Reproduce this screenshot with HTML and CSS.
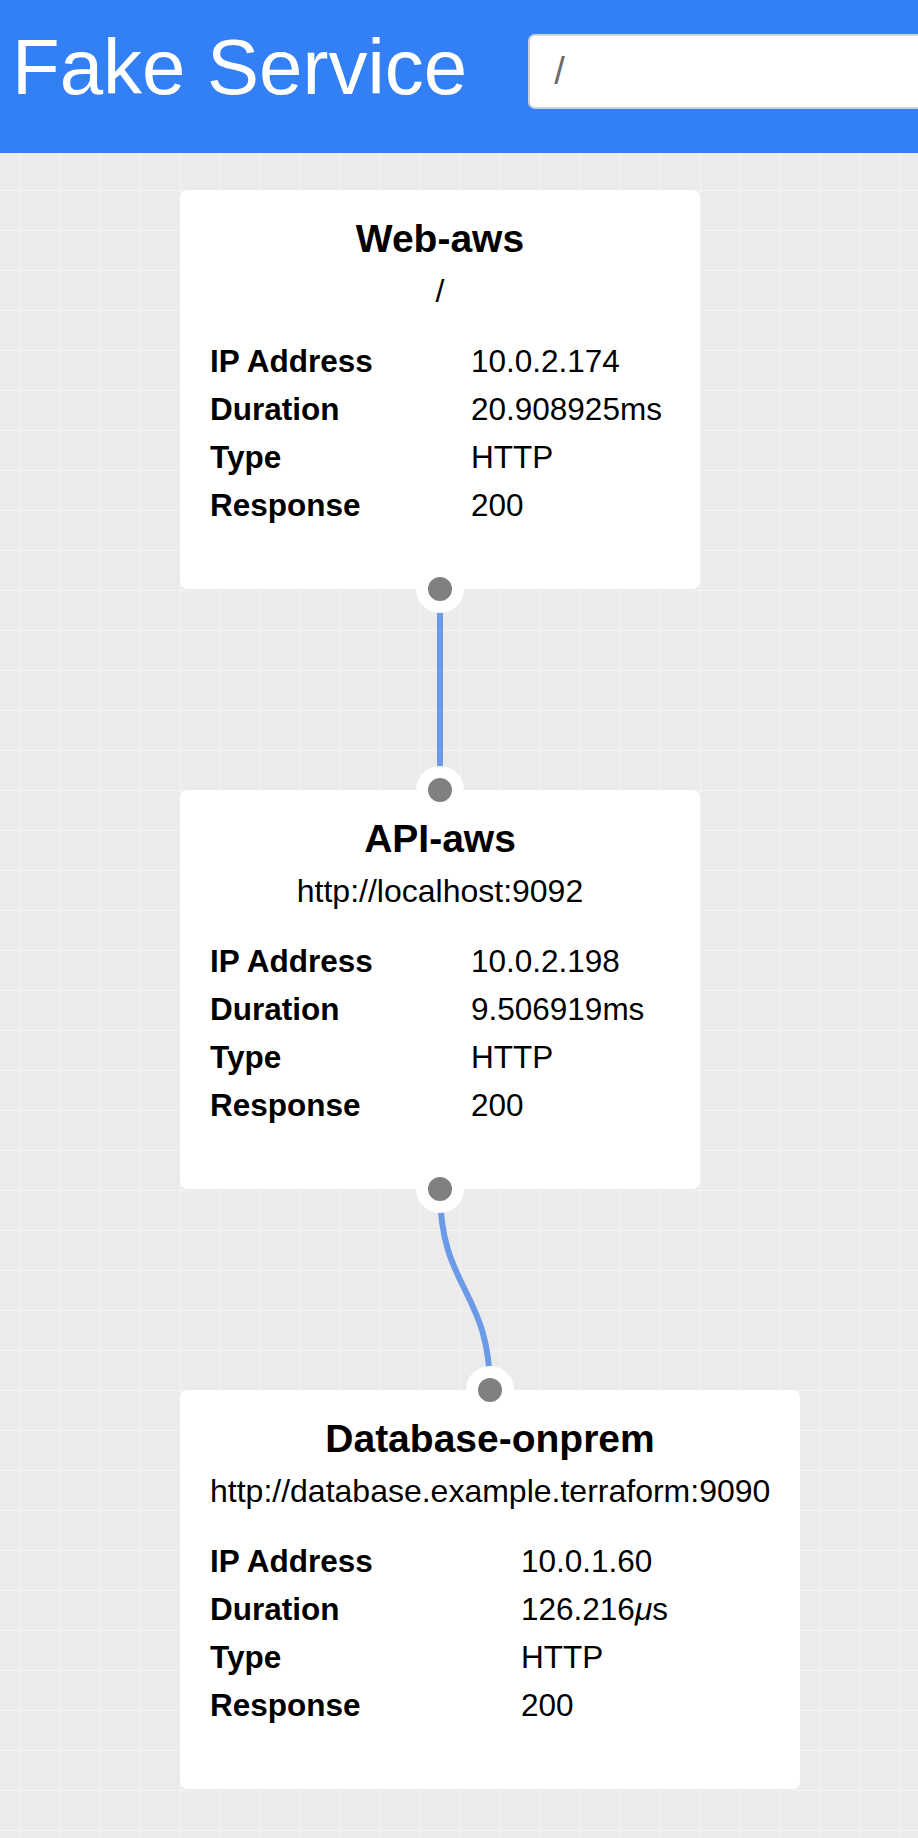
FILE: index.html
```html
<!DOCTYPE html>
<html>
<head>
    <meta charset="utf-8">
    <title>Fake Service</title>
    <link rel="stylesheet" href="styles.css">
</head>
<body>
    <header class="topbar">
        <h1 class="brand">Fake Service</h1>
        <input class="path-input" type="text" value="/">
    </header>

    <main class="canvas">
        <!-- edges sit under the nodes -->
        <svg class="edges" width="918" height="1685" viewBox="0 0 918 1685">
            <path d="M440 437 L440 637" />
            <path d="M440 1037 C440 1137 490 1137 490 1237" />
        </svg>

        <div class="node node-web">
            <h2 class="node-name">Web-aws</h2>
            <div class="node-uri">/</div>
            <dl class="node-info">
                <dt>IP Address</dt><dd>10.0.2.174</dd>
                <dt>Duration</dt><dd>20.908925ms</dd>
                <dt>Type</dt><dd>HTTP</dd>
                <dt>Response</dt><dd>200</dd>
            </dl>
            <span class="handle handle-bottom"></span>
        </div>

        <div class="node node-api">
            <span class="handle handle-top"></span>
            <h2 class="node-name">API-aws</h2>
            <div class="node-uri">http://localhost:9092</div>
            <dl class="node-info">
                <dt>IP Address</dt><dd>10.0.2.198</dd>
                <dt>Duration</dt><dd>9.506919ms</dd>
                <dt>Type</dt><dd>HTTP</dd>
                <dt>Response</dt><dd>200</dd>
            </dl>
            <span class="handle handle-bottom"></span>
        </div>

        <div class="node node-db">
            <span class="handle handle-top"></span>
            <h2 class="node-name">Database-onprem</h2>
            <div class="node-uri">http://database.example.terraform:9090</div>
            <dl class="node-info">
                <dt>IP Address</dt><dd>10.0.1.60</dd>
                <dt>Duration</dt><dd>126.216<i>μ</i>s</dd>
                <dt>Type</dt><dd>HTTP</dd>
                <dt>Response</dt><dd>200</dd>
            </dl>
        </div>
    </main>
</body>
</html>
```

FILE: styles.css
```css
:root {
    --header-bg: #3380f6;
    --canvas-bg: #ebebeb;
    --grid-line: #f4f4f4;
    --edge-color: #6b9ae8;
    --handle-color: #808080;
}

* {
    box-sizing: border-box;
}

body {
    margin: 0;
    overflow: hidden;
    font-family: "Liberation Sans", Arial, Helvetica, sans-serif;
    color: #000;
    background: var(--canvas-bg);
}

/* header bar */
.topbar {
    display: flex;
    align-items: flex-start;
    height: 153px;
    padding: 28px 0 0 12px;
    background: var(--header-bg);
    overflow: hidden;
}

.brand {
    margin: 0;
    font-size: 78px;
    line-height: 78px;
    font-weight: normal;
    color: #fff;
    white-space: nowrap;
}

.path-input {
    flex: none;
    width: 620px;
    height: 75px;
    margin: 6px 0 0 61px;
    padding: 0 0 0 24px;
    border: 2px solid #cdd2d9;
    border-radius: 7px;
    background: #fff;
    font-family: inherit;
    font-size: 38px;
    color: #6b6b6b;
    outline: none;
}

/* diagram canvas */
.canvas {
    position: relative;
    height: 1685px;
    background-color: var(--canvas-bg);
    background-image:
        linear-gradient(to right, var(--grid-line) 1px, transparent 1px),
        linear-gradient(to bottom, var(--grid-line) 1px, transparent 1px);
    background-size: 40px 40px;
    background-position: 20px 37px;
}

.edges {
    position: absolute;
    top: 0;
    left: 0;
}

.edges path {
    fill: none;
    stroke: var(--edge-color);
    stroke-width: 6;
}

.node {
    position: absolute;
    left: 180px;
    width: 520px;
    padding: 25px 30px 60px 30px;
    background: #fff;
    border-radius: 7px;
}

.node-web { top: 37px; }
.node-api { top: 637px; }
.node-db  { top: 1237px; width: 620px; }

.node-name {
    margin: 0;
    font-size: 39px;
    line-height: 48px;
    font-weight: bold;
    text-align: center;
}

.node-uri {
    margin-top: 8px;
    font-size: 32px;
    line-height: 40px;
    text-align: center;
    white-space: nowrap;
}

.node-info {
    display: grid;
    grid-template-columns: 261px 1fr;
    margin: 26px 0 0;
    font-size: 31.5px;
    line-height: 48px;
    white-space: nowrap;
}

.node-db .node-info {
    grid-template-columns: 311px 1fr;
}

.node-info dt {
    font-weight: bold;
}

.node-info dd {
    margin: 0;
}

/* connection points */
.handle {
    position: absolute;
    left: 50%;
    width: 48px;
    height: 48px;
    margin-left: -24px;
    border: 12px solid #fff;
    border-radius: 50%;
    background: var(--handle-color);
}

.handle-top {
    top: -24px;
}

.handle-bottom {
    bottom: -24px;
}
```
